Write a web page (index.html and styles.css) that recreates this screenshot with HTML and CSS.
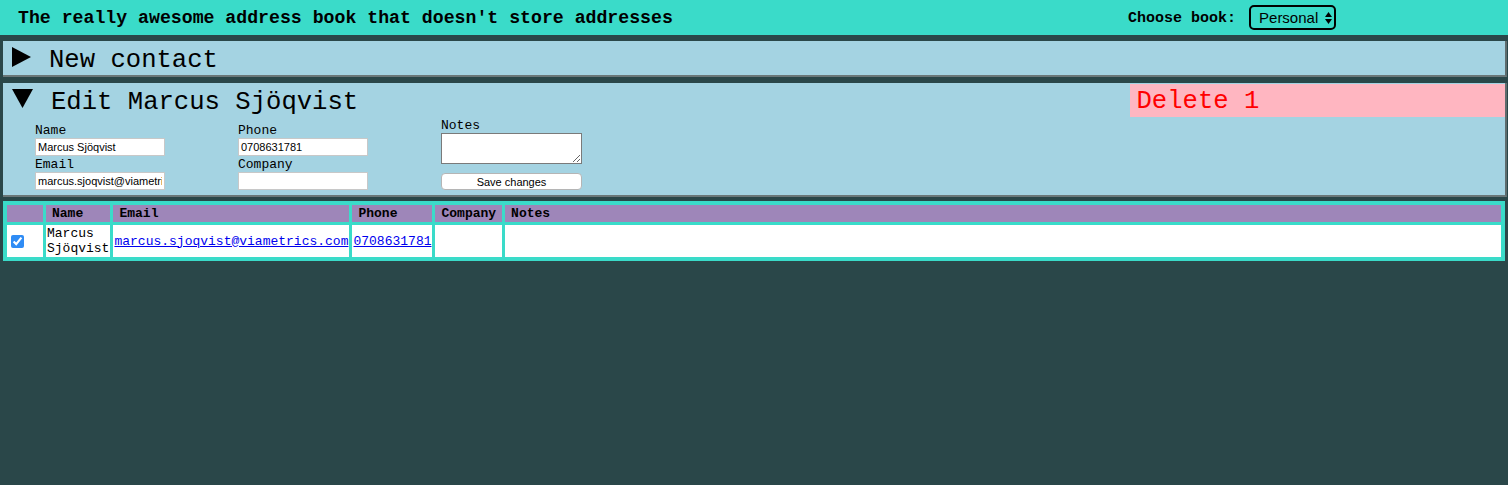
FILE: index.html
```html
<!DOCTYPE html>
<html lang="en">
<head>
<meta charset="utf-8">
<title>Address book</title>
<link rel="stylesheet" href="styles.css">
</head>
<body>
<header class="topbar">
  <h1 class="title">The really awesome address book that doesn't store addresses</h1>
  <div class="chooser">
    <label class="chooser-label" for="book">Choose book:</label>
    <span class="select-wrap">
      <select id="book" class="book-select"><option>Personal</option><option>Work</option></select>
      <svg class="select-arrows" width="7" height="14" viewBox="0 0 7 14"><polygon points="3.5,1 7,6 0,6" fill="#000"/><polygon points="0,8 7,8 3.5,13" fill="#000"/></svg>
    </span>
  </div>
</header>

<section class="panel panel-new">
  <div class="panel-head">
    <svg class="tri tri-right" width="19" height="20" viewBox="0 0 19 20"><polygon points="0,0 19,10 0,20" fill="#000"/></svg>
    <span>New contact</span>
  </div>
</section>

<section class="panel panel-edit">
  <div class="delete-box">Delete 1</div>
  <div class="panel-head">
    <svg class="tri tri-down" width="21" height="19" viewBox="0 0 21 19"><polygon points="0,0 21,0 10.5,19" fill="#000"/></svg>
    <span>Edit Marcus Sjöqvist</span>
  </div>
  <form class="edit-form">
    <div class="col col-pad">
      <label class="lbl">Name</label>
      <input class="inp" type="text" value="Marcus Sjöqvist">
      <label class="lbl">Email</label>
      <input class="inp" type="text" value="marcus.sjoqvist@viametrics.com">
    </div>
    <div class="col col-pad">
      <label class="lbl">Phone</label>
      <input class="inp" type="text" value="0708631781">
      <label class="lbl">Company</label>
      <input class="inp" type="text" value="">
    </div>
    <div class="col">
      <label class="lbl">Notes</label>
      <textarea class="notes"></textarea>
      <button type="button" class="save">Save changes</button>
    </div>
  </form>
</section>

<table class="contacts">
  <thead>
    <tr>
      <th class="c-check"></th>
      <th>Name</th>
      <th>Email</th>
      <th>Phone</th>
      <th>Company</th>
      <th class="c-notes">Notes</th>
    </tr>
  </thead>
  <tbody>
    <tr>
      <td class="c-check"><input type="checkbox" checked class="chk"></td>
      <td>Marcus Sjöqvist</td>
      <td><a href="#">marcus.sjoqvist@viametrics.com</a></td>
      <td><a href="#">0708631781</a></td>
      <td></td>
      <td></td>
    </tr>
  </tbody>
</table>
</body>
</html>
```

FILE: styles.css
```css
* { box-sizing: border-box; }

body {
  margin: 0;
  background: #2a4749;
  font-family: "Liberation Mono", "Courier New", monospace;
  color: #000;
  min-height: 485px;
}

.topbar {
  height: 35px;
  background: #3adbc9;
  display: grid;
  grid-template-columns: 1fr 380px;
  align-items: center;
}

.title {
  margin: 0;
  padding-left: 18px;
  padding-top: 1px;
  font-size: 18.2px;
  font-weight: bold;
  white-space: nowrap;
}

.chooser {
  display: flex;
  align-items: center;
  gap: 13px;
}

.chooser-label {
  font-size: 15px;
  font-weight: bold;
  padding-top: 1px;
}

.select-wrap {
  position: relative;
  display: inline-block;
}

.book-select {
  appearance: none;
  -webkit-appearance: none;
  width: 87px;
  height: 25px;
  border: 2px solid #000;
  border-radius: 5px;
  background: transparent;
  font-family: "Liberation Sans", Arial, sans-serif;
  font-size: 15px;
  padding: 0 0 0 8px;
  color: #000;
  display: block;
}

.select-arrows {
  position: absolute;
  right: 4px;
  top: 6px;
  pointer-events: none;
}

.panel {
  background: #a4d3e2;
  margin: 6px 1px 0 3px;
  border-right: 2px solid #5f6c6d;
  border-bottom: 2px solid #6a7778;
}

.panel-head {
  font-size: 25.6px;
  line-height: 30px;
  padding-left: 9px;
  padding-top: 5px;
  height: 34px;
  display: flex;
  align-items: flex-start;
  white-space: nowrap;
}

.tri { flex: none; }
.tri-right { margin-top: 1px; margin-right: 18px; }
.tri-down { margin-top: 1px; margin-right: 18px; }

.delete-box {
  float: right;
  width: 25%;
  margin-top: 1px;
  background: #ffb6c1;
  color: #ff0000;
  font-size: 25.6px;
  line-height: 30px;
  padding: 3px 7px 0;
}

.edit-form {
  display: grid;
  grid-template-columns: repeat(3, 203px);
  padding: 0 0 5px 32px;
  margin: 0;
}

.col {
  display: flex;
  flex-direction: column;
  align-items: flex-start;
}

.col-pad { padding-top: 5px; }

.lbl {
  font-size: 13px;
  line-height: 14px;
  padding-top: 2px;
}

.inp {
  width: 130px;
  height: 18px;
  border: 1px solid #c8c8c8;
  background: #fff;
  font-family: "Liberation Sans", Arial, sans-serif;
  font-size: 11px;
  padding: 0 2px;
  margin: 0;
  color: #000;
}

.notes {
  width: 141px;
  height: 31px;
  border: 1px solid #7a7a7a;
  margin: 0;
  resize: vertical;
  background: #fff;
}

.save {
  margin-top: 9px;
  width: 141px;
  height: 17px;
  border: 1px solid #b5b5b5;
  border-radius: 4px;
  background: #fff;
  font-family: "Liberation Sans", Arial, sans-serif;
  font-size: 11px;
  padding: 0;
  color: #000;
}

.contacts {
  margin: 4px 3px 0;
  width: calc(100% - 6px);
  background: #3adbc9;
  border: 1px solid #3adbc9;
  border-spacing: 3px;
  font-size: 13px;
}

.contacts th {
  background: #9e86b9;
  text-align: left;
  padding: 1px 6px;
  font-size: 13px;
  font-weight: bold;
  white-space: nowrap;
}

.contacts td {
  background: #fff;
  padding: 1px;
  vertical-align: middle;
}

.contacts .c-check { padding: 0; }
.contacts .c-notes { width: 100%; }

.contacts a { color: #0000ee; }

.chk {
  margin: 3px 19px 3px 4px;
  width: 13px;
  height: 13px;
  accent-color: #2f8cf5;
  vertical-align: middle;
}
```
